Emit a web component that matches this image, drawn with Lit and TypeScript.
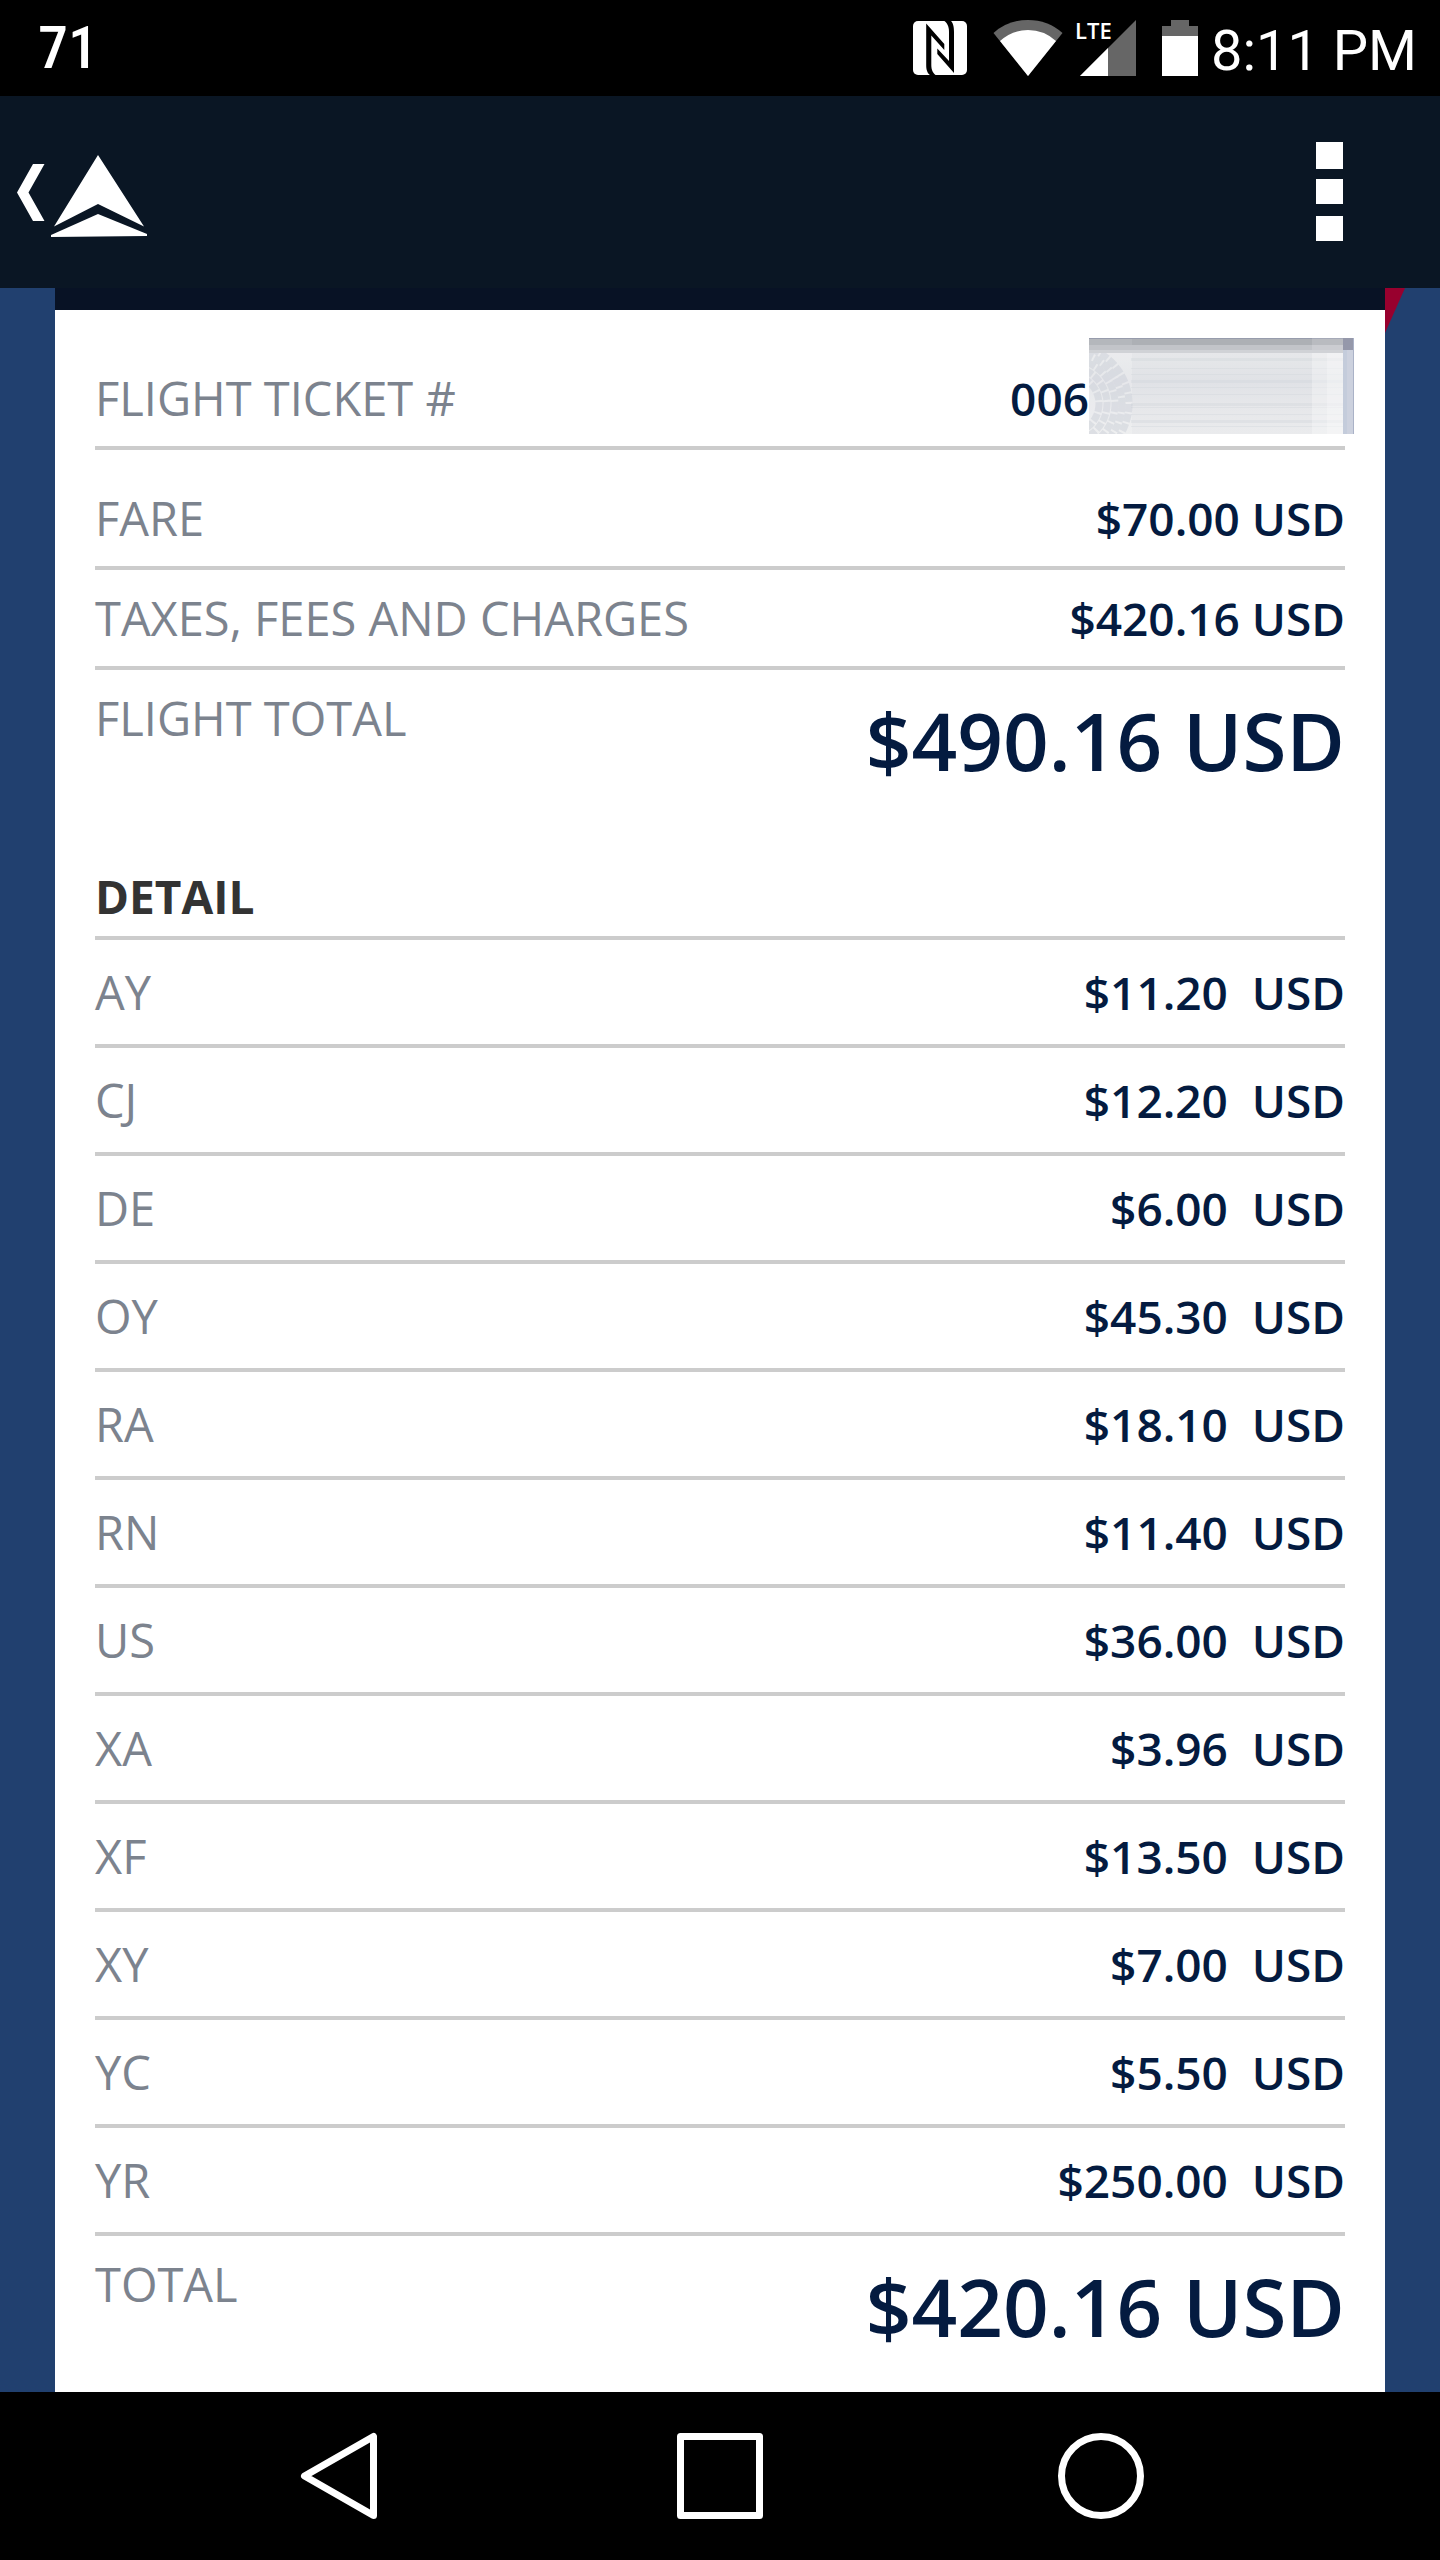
import { LitElement, html, css, svg } from "lit";
import { customElement, property } from "lit/decorators.js";

interface Charge {
  code: string;
  amount: string;
}

const CHARGES: Charge[] = [
  { code: "AY", amount: "$11.20" },
  { code: "CJ", amount: "$12.20" },
  { code: "DE", amount: "$6.00" },
  { code: "OY", amount: "$45.30" },
  { code: "RA", amount: "$18.10" },
  { code: "RN", amount: "$11.40" },
  { code: "US", amount: "$36.00" },
  { code: "XA", amount: "$3.96" },
  { code: "XF", amount: "$13.50" },
  { code: "XY", amount: "$7.00" },
  { code: "YC", amount: "$5.50" },
  { code: "YR", amount: "$250.00" },
];

@customElement("status-bar")
export class StatusBar extends LitElement {
  static styles = css`
    :host {
      display: flex;
      align-items: center;
      justify-content: space-between;
      height: 96px;
      padding: 0 23px 0 38px;
      background: #000;
      color: #fff;
    }
    .level {
      font: 500 60px/96px "Roboto Condensed", "Roboto", sans-serif;
    }
    .icons {
      display: flex;
      align-items: center;
    }
    .icons svg {
      display: block;
    }
    .nfc {
      margin-right: 26px;
    }
    .wifi {
      margin-right: 12px;
    }
    .signal {
      margin-right: 26px;
    }
    .battery {
      margin-right: 13px;
    }
    .lte {
      font: 600 22px "Open Sans", sans-serif;
    }
    .clock {
      padding-top: 6px;
      font: 56px/90px "Roboto", sans-serif;
    }
  `;

  render() {
    return html`
      <span class="level">71</span>
      <div class="icons">
        <svg class="nfc" width="54" height="56" viewBox="0 0 54 56" aria-hidden="true">
          <rect x="0" y="1" width="54" height="54" rx="5" fill="#fff" />
          <path
            d="M13.200 3.500L31.300 24V30L18.300 15.500V45C18.300 50 20 53.500 24 56H18C14 53 13.200 49.500 13.200 45Z"
            fill="#000"
          />
          <path
            d="M41 53L24.300 34V28.500L36 41V12C36 6 34 2.500 30 0H37C40 2.500 41 6 41 12Z"
            fill="#000"
          />
        </svg>
        <svg class="wifi" width="70" height="56" viewBox="0 0 70 56" aria-hidden="true">
          <path d="M35 56L0.500 13Q15 0 35 0T69.500 13Z" fill="#666" />
          <path d="M35 56L7 21Q19 10 35 10T63 21Z" fill="#fff" />
        </svg>
        <svg class="signal" width="61" height="76" viewBox="0 -10 61 76" role="img" aria-label="LTE">
          <path d="M5 56L61 0V56Z" fill="#666" />
          <path d="M5 56L33 28V56Z" fill="#fff" />
          <text class="lte" x="0" y="19" fill="#fff">LTE</text>
        </svg>
        <svg class="battery" width="36" height="56" viewBox="0 0 36 56" aria-hidden="true">
          <path d="M9 0H27V6H36V56H0V6H9Z" fill="#666" />
          <rect y="16" width="36" height="40" fill="#fff" />
        </svg>
        <span class="clock">8:11 PM</span>
      </div>
    `;
  }
}

@customElement("app-bar")
export class AppBar extends LitElement {
  static styles = css`
    :host {
      display: flex;
      align-items: center;
      justify-content: space-between;
      height: 192px;
      padding: 0 97px 0 12px;
      background: #0a1624;
    }
    button {
      display: block;
      padding: 0;
      border: 0;
      background: none;
      cursor: pointer;
    }
    svg {
      display: block;
    }
  `;

  render() {
    return html`
      <button type="button" aria-label="Back">
        <svg width="140" height="100" viewBox="0 0 140 100" fill="#fff">
          <path d="M21 22H32.500L16.500 50.500L32.500 79H21L5 50.500Z" />
          <path d="M86 13L132 84.500L86 62L42 84.500Z" />
          <path d="M86 72L135 92V94L39 95V93Z" />
        </svg>
      </button>
      <button type="button" aria-label="More options">
        <svg width="48" height="100" viewBox="0 0 48 100" fill="#fff">
          <rect x="21" y="0" width="27" height="27" />
          <rect x="21" y="37" width="27" height="25" />
          <rect x="21" y="74" width="27" height="25" />
        </svg>
      </button>
    `;
  }
}

@customElement("redacted-number")
export class RedactedNumber extends LitElement {
  static styles = css`
    :host {
      display: block;
    }
    svg {
      display: block;
    }
  `;

  render() {
    const rows = [20, 30, 36, 42, 49, 56, 65, 69, 76, 82, 88];
    const rings = [59, 52, 45, 37, 29];
    return html`
      <svg width="265" height="96" viewBox="0 0 265 96" aria-hidden="true">
        <defs>
          <linearGradient id="body" x1="0" x2="0" y1="0" y2="1">
            <stop offset="0" stop-color="#e9eaec" />
            <stop offset="0.450" stop-color="#e0e2e6" />
            <stop offset="0.700" stop-color="#e6e7ea" />
            <stop offset="1" stop-color="#eaebed" />
          </linearGradient>
        </defs>
        <rect width="265" height="96" fill="url(#body)" />
        <rect width="43" height="96" fill="#fff" opacity="0.200" />
        ${rows.map(
          (y, i) => svg`<rect x="42" y=${y} width="212" height=${i % 3 === 0 ? 3 : 1}
            fill="#cfd3d9" opacity="0.350" />`
        )}
        <rect x="223" y="15" width="31" height="81" fill="#fff" opacity="0.300" />
        <rect x="238" y="15" width="16" height="81" fill="#fff" opacity="0.250" />
        ${rings.map(
          (r) => svg`<circle cx="-19" cy="66" r=${r} fill="none" stroke="#bcc3cd"
            stroke-width="7" stroke-dasharray="8 2" opacity="0.350" />`
        )}
        <rect x="43" width="222" height="8" fill="#adb0b5" />
        <rect width="43" height="8" fill="#b4b7bc" />
        <rect width="265" height="1" fill="#979cac" />
        <rect y="7" width="265" height="5" fill="#c2c4c9" />
        <rect y="12" width="265" height="3" fill="#d0d2d6" />
        <rect x="223" width="31" height="12" fill="#fff" opacity="0.150" />
        <rect x="254" width="11" height="96" fill="#ccd1de" />
        <rect x="254" width="4" height="96" fill="#c4ccdb" />
        <rect x="254" width="11" height="12" fill="#9598aa" />
        <rect x="264" width="1" height="96" fill="#aab2c7" />
      </svg>
    `;
  }
}

@customElement("fare-receipt")
export class FareReceipt extends LitElement {
  @property({ attribute: false }) charges: Charge[] = [];

  static styles = css`
    :host {
      display: block;
      box-sizing: border-box;
      padding: 28px 40px;
      border-top: 22px solid #081225;
      background: #fff;
      color: #041b40;
      font: 47px/72px "Open Sans", "Noto Sans", sans-serif;
    }
    dl,
    dt,
    dd,
    h2 {
      margin: 0;
    }
    .row {
      display: flex;
      align-items: flex-start;
      justify-content: space-between;
      padding: 12px 0;
      border-bottom: 4px solid #ccc;
    }
    .ticket {
      align-items: flex-end;
      padding-top: 0;
    }
    .fare {
      padding-top: 32px;
    }
    .sum {
      padding-bottom: 0;
      border-bottom: 0;
    }
    .label,
    .charges th {
      color: #7c838e;
      font-weight: 400;
    }
    .value,
    .charges td {
      font-size: 46px;
      font-weight: 600;
      white-space: nowrap;
    }
    .number {
      display: flex;
      align-items: flex-end;
      margin-right: -9px;
    }
    .row .grand,
    .charges .grand {
      font-size: 80px;
      line-height: 116px;
    }
    .heading {
      margin-top: 62px;
      padding-bottom: 4px;
      border-bottom: 4px solid #ccc;
      color: #333;
      font-size: 46px;
      font-weight: 700;
    }
    .charges {
      width: 100%;
      border-spacing: 0;
    }
    .charges th,
    .charges td {
      padding: 16px 0;
      border-bottom: 4px solid #ccc;
      vertical-align: top;
      text-align: left;
    }
    .charges td {
      text-align: right;
    }
    .charges tfoot th,
    .charges tfoot td {
      padding: 12px 0 0;
      border-bottom: 0;
    }
  `;

  render() {
    return html`
      <dl>
        <div class="row ticket">
          <dt class="label">FLIGHT TICKET #</dt>
          <dd class="value number">006<redacted-number></redacted-number></dd>
        </div>
        <div class="row fare">
          <dt class="label">FARE</dt>
          <dd class="value">$70.00 USD</dd>
        </div>
        <div class="row">
          <dt class="label">TAXES, FEES AND CHARGES</dt>
          <dd class="value">$420.16 USD</dd>
        </div>
        <div class="row sum">
          <dt class="label">FLIGHT TOTAL</dt>
          <dd class="value grand">$490.16 USD</dd>
        </div>
      </dl>
      <h2 class="heading" id="detail">DETAIL</h2>
      <table class="charges" aria-labelledby="detail">
        <tbody>
          ${this.charges.map(
            (c) => html`<tr>
              <th scope="row">${c.code}</th>
              <td>${c.amount}&nbsp; USD</td>
            </tr>`
          )}
        </tbody>
        <tfoot>
          <tr>
            <th scope="row">TOTAL</th>
            <td class="grand">$420.16 USD</td>
          </tr>
        </tfoot>
      </table>
    `;
  }
}

@customElement("nav-bar")
export class NavBar extends LitElement {
  static styles = css`
    :host {
      display: grid;
      grid-template-columns: repeat(3, 1fr);
      align-items: center;
      justify-items: center;
      height: 168px;
      padding: 0 148px;
      background: #000;
    }
    button {
      display: block;
      padding: 0;
      border: 0;
      background: none;
      cursor: pointer;
    }
    svg {
      display: block;
      fill: none;
      stroke: #fff;
      stroke-width: 7;
      stroke-linejoin: round;
    }
  `;

  render() {
    return html`
      <button type="button" aria-label="Back">
        <svg width="88" height="88" viewBox="0 0 88 88"><path d="M78.500 4.500V83.500L9.500 44Z" /></svg>
      </button>
      <button type="button" aria-label="Home">
        <svg width="88" height="88" viewBox="0 0 88 88">
          <rect x="4.500" y="4.500" width="79" height="79" />
        </svg>
      </button>
      <button type="button" aria-label="Recent apps">
        <svg width="88" height="88" viewBox="0 0 88 88"><circle cx="44" cy="44" r="39.500" /></svg>
      </button>
    `;
  }
}

@customElement("app-root")
export class AppRoot extends LitElement {
  static styles = css`
    :host {
      display: flex;
      flex-direction: column;
      min-height: 100vh;
      background: #21406f;
    }
    .page {
      position: relative;
      display: flex;
      flex: 1;
      flex-direction: column;
      padding: 0 55px;
    }
    .receipt {
      flex: 1;
    }
    .ribbon {
      position: absolute;
      top: 0;
      right: 35px;
    }
  `;

  render() {
    return html`
      <status-bar></status-bar>
      <app-bar></app-bar>
      <main class="page">
        <svg class="ribbon" width="20" height="45" viewBox="0 0 20 45" aria-hidden="true">
          <path d="M0 0H20L0 45Z" fill="#98002e" />
        </svg>
        <fare-receipt class="receipt" .charges=${CHARGES}></fare-receipt>
      </main>
      <nav-bar></nav-bar>
    `;
  }
}
